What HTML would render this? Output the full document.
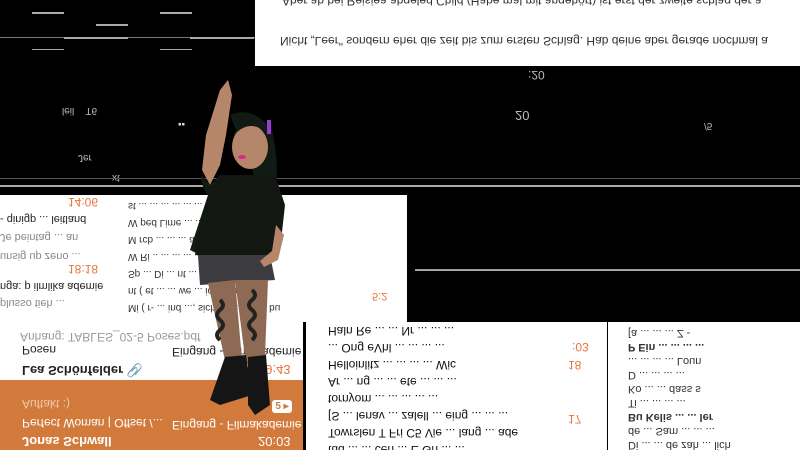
<!DOCTYPE html>
<html style="width:800px;height:450px;overflow:hidden"><head><meta charset="utf-8"><style>
*{margin:0;padding:0;box-sizing:border-box}
body{width:800px;height:450px;background:#000;position:relative;overflow:hidden;font-family:"Liberation Sans",sans-serif}
.a{position:absolute}
.f{transform:scaleY(-1);white-space:nowrap}
.t{font-size:12px;color:#222}
.o{color:#e8743b}
.g{color:#888}
.ln{position:absolute;height:1px;background:#ddd}
.gl{position:absolute;height:2px;background:#aaa}
.box{position:absolute;overflow:hidden;background:#fff}
</style></head><body>
<div class="box" style="left:255px;top:0;width:545px;height:66px">
<div class="a f t" style="left:27px;top:-6px;font-size:12px;color:#333">Aber ab bei Reisiea abgeled Child (Habe mal mit angehört) ist erst der zweite schlag der a</div>
<div class="a f t" style="left:25px;top:34px;font-size:12px;color:#333">Nicht „Leer" sondern eher die zeit bis zum ersten Schlag. Hab deine aber gerade nochmal a</div>
</div>
<div class="gl" style="left:32px;top:12px;width:32px"></div>
<div class="gl" style="left:160px;top:12px;width:32px"></div>
<div class="gl" style="left:0;top:37px;width:255px;height:1px;background:#777"></div>
<div class="gl" style="left:96px;top:24px;width:32px"></div>
<div class="gl" style="left:64px;top:37px;width:64px"></div>
<div class="gl" style="left:190px;top:37px;width:64px"></div>
<div class="gl" style="left:32px;top:49px;width:32px;height:1px"></div>
<div class="gl" style="left:160px;top:49px;width:32px;height:1px"></div>
<div class="a f" style="left:62px;top:105px;font-size:10px;color:#bbb">leil &nbsp;&nbsp;&nbsp;T6</div>
<div class="a f" style="left:78px;top:152px;font-size:10px;color:#bbb">Jer</div>
<div class="a f" style="left:112px;top:172px;font-size:10px;color:#bbb">xt</div>
<div class="a f" style="left:178px;top:118px;font-size:10px;color:#ddd">▪▪</div>
<div class="a f" style="left:515px;top:108px;font-size:13px;color:#bbb">20</div>
<div class="a f" style="left:528px;top:68px;font-size:12px;color:#bbb">:20</div>
<div class="a f" style="left:704px;top:120px;font-size:10px;color:#bbb">/5</div>
<div class="gl" style="left:415px;top:269px;width:385px;height:1px;background:#999"></div>
<div class="gl" style="left:415px;top:270px;width:385px;height:1px"></div>
<div class="gl" style="left:0;top:178px;width:800px;height:1px;background:#555"></div>
<div class="gl" style="left:0;top:185px;width:800px;height:2px;background:#aaa"></div>
<div class="box" style="left:0;top:195px;width:110px;height:130px">
<div class="a f o" style="left:68px;top:0px;font-size:12px">14:06</div>
<div class="a f t" style="left:0;top:18px;font-size:11px">- qinigp ... leitland</div>
<div class="a f t g" style="left:0;top:36px;font-size:11px">Je beintag ... an</div>
<div class="a f t g" style="left:0;top:55px;font-size:11px">unsig up zeno ...</div>
<div class="a f o" style="left:68px;top:67px;font-size:12px">18:18</div>
<div class="a f t" style="left:0;top:85px;font-size:11px">nga: p ilmlika ademie</div>
<div class="a f t g" style="left:0;top:102px;font-size:11px">plusso tieh ...</div>
</div>
<div class="box" style="left:110px;top:195px;width:300px;height:128px">
<div class="a f t" style="left:18px;top:2px;font-size:10px;line-height:17px;color:#333">
Mi ( r- ... ind ..., sicher ..... ... ho bu<br>nt ( et ... ... we ... iolt ... ot<br>Sp ... Di ... nt ... ... ot ... dim<br>W Ri .. ... ... ... ... tod ..<br>M rcb ... ... ... aic ... PS ... Jei<br>W ped Lime ... ... ... ... beit<br>st ... ... ... ... ... ... igo</div>
<div class="a f o" style="left:262px;top:95px;font-size:11px">5:2</div>
</div>
<div class="a" style="left:407px;top:195px;width:3px;height:130px;background:#000"></div>
<div class="box" style="left:0;top:322px;width:303px;height:58px">
<div class="a f" style="left:20px;top:8px;font-size:12px;color:#999">Anhang: TABLES_02-5 Poses.pdf</div>
<div class="a f" style="left:22px;top:21px;font-size:12px;color:#222">Posen</div>
<div class="a f" style="left:172px;top:23px;font-size:12px;color:#222">Eingang - Filmakademie</div>
<div class="a f" style="left:22px;top:40px;font-size:13px;font-weight:bold;color:#222">Lea Schönfelder 📎</div>
<div class="a f o" style="left:258px;top:40px;font-size:13px">19:43</div>
</div>
<div class="a" style="left:0;top:380px;width:303px;height:70px;background:#d27a3c"></div>
<div class="a f" style="left:22px;top:397px;font-size:12px;color:#f0c8a8">Auftakt :)</div>
<div class="a" style="left:272px;top:400px;width:20px;height:13px;background:#fff;border-radius:3px;color:#d27a3c;font-size:10px;font-weight:bold;text-align:center;line-height:13px">5 ▸</div>
<div class="a f" style="left:22px;top:416px;font-size:12px;color:#fff">Perfect Woman | Offset /...</div>
<div class="a f" style="left:172px;top:418px;font-size:12px;color:#fff">Eingang - Filmakademie</div>
<div class="a f" style="left:22px;top:434px;font-size:13px;font-weight:bold;color:#fff">Jonas Schwall</div>
<div class="a f" style="left:258px;top:434px;font-size:13px;color:#fff">20:03</div>
<div class="box" style="left:306px;top:322px;width:301px;height:128px">
<div class="a f t" style="left:22px;top:0px;font-size:12px;line-height:17px;color:#111">
tud ... ... cen ... E Gn ... ...<br>Towrslen T Fri C5 Vie ... lang ... ade<br>[S ... lenav ... zalell ... eing ... ... ...<br>tornyom ... ... ... ... ...<br>Ar ... ng ... ... ete ... ... ...<br>Helloinlitz ... ... ... ... Wic<br>... Ong eVhl ... ... ... ...<br>Haln Re ... ... Nr ... ... ...</div>
<div class="a f o" style="left:266px;top:18px;font-size:12px">:03</div>
<div class="a f o" style="left:262px;top:36px;font-size:12px">18</div>
<div class="a f o" style="left:262px;top:90px;font-size:12px">17</div>
</div>
<div class="a" style="left:303px;top:322px;width:3px;height:128px;background:#000"></div>
<div class="box" style="left:608px;top:322px;width:192px;height:128px">
<div class="a f t" style="left:20px;top:4px;font-size:11px;line-height:14px;color:#333">
Di ... ... de zah ... lich<br>de ... Sam ... ... ...<br><b>Bu Kelis ... ... ler</b><br>Ti ... ... ... ...<br>Ko ... ... dass s<br>D ... ... ... ...<br>... ... ... ... Loun<br><b>P Ein ... ... ... ...</b><br>[a ... ... ... Z -</div>
</div>
<svg class="a" style="left:180px;top:75px" width="120" height="360" viewBox="0 0 120 360">
<path d="M40 15 L48 5 L52 20 L46 60 L40 90 L30 110 L22 95 L26 60 Z" fill="#b6866a"/>
<path d="M28 120 Q20 110 22 100 L30 110 L40 100 L45 150 L20 180 L10 175 Z" fill="#111a13"/>
<path d="M50 40 Q72 30 92 55 Q100 90 95 120 L80 115 Z" fill="#111a13"/>
<ellipse cx="70" cy="72" rx="18" ry="22" fill="#b6866a"/>
<path d="M52 60 Q70 38 88 62 L84 56 Q70 45 56 58 Z" fill="#111a13"/>
<rect x="87" y="45" width="4" height="14" fill="#9b3ad6"/>
<ellipse cx="62" cy="82" rx="4" ry="2" fill="#d62a8c"/>
<path d="M40 100 L95 100 L105 130 L100 175 L90 180 L60 185 L15 180 L25 130 Z" fill="#121712"/>
<path d="M18 180 L90 180 L95 205 L20 210 Z" fill="#3c3c40"/>
<path d="M96 150 L104 160 L98 185 L84 192 L80 186 L92 176 Z" fill="#b6866a"/>
<path d="M28 208 L55 205 L62 285 L46 290 Z" fill="#8e6a55"/>
<path d="M55 205 L88 205 L85 280 L66 290 Z" fill="#8e6a55"/>
<path d="M40 225 q6 5 0 10 q-6 5 0 10 q6 5 0 10 q-6 5 0 10 M72 215 q6 5 0 10 q-6 5 0 10 q6 5 0 10 q-6 5 0 10 q6 5 0 10" stroke="#222" stroke-width="4" fill="none"/>
<path d="M45 282 L66 280 L72 320 L40 330 L30 325 Z" fill="#151515"/>
<path d="M68 282 L86 280 L90 330 L75 340 L68 330 Z" fill="#151515"/>
</svg>
</body></html>
